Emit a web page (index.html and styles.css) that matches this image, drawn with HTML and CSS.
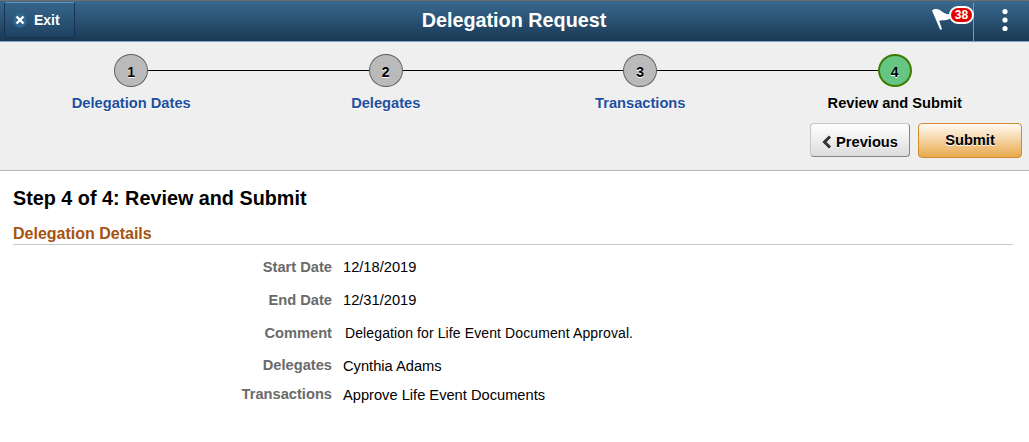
FILE: index.html
```html
<!DOCTYPE html>
<html lang="en">

<head>
  <meta charset="utf-8">
  <title>Delegation Request</title>
  <link rel="stylesheet" href="styles.css">
</head>

<body>
  <header class="banner">
    <button class="exit">
      <svg class="exit-icon" width="14" height="16" viewBox="0 0 14 16">
        <ellipse cx="7" cy="8" rx="7" ry="7.5" fill="#2f6790"/>
        <path d="M3.5 4.5L10.5 11.5M10.5 4.5L3.5 11.5" stroke="#fff" stroke-width="2.4"/>
      </svg>
      Exit
    </button>
    <h1>Delegation Request</h1>
    <div class="actions">
      <button class="flag">
        <svg width="22" height="24" viewBox="0 0 22 24">
          <path d="M0 2.4C3 .3 6 1 8.500 2.500C11 4.500 14 6.600 18 6.200L18 10.500C14.500 13.200 11 11.500 7.200 12.800L10 21.200L8.200 21.800Z" fill="#fff"/>
        </svg>
        <span class="badge">38</span>
      </button>
      <button class="menu">
        <svg width="6" height="24" viewBox="0 0 6 24">
          <circle cx="3" cy="3.500" r="2.600" fill="#fff"/>
          <circle cx="3" cy="12" r="2.600" fill="#fff"/>
          <circle cx="3" cy="20.500" r="2.600" fill="#fff"/>
        </svg>
      </button>
    </div>
  </header>

  <nav class="train">
    <ol class="steps">
      <li><span class="stop">1</span><a>Delegation Dates</a></li>
      <li><span class="stop">2</span><a>Delegates</a></li>
      <li><span class="stop">3</span><a>Transactions</a></li>
      <li class="current"><span class="stop">4</span><a>Review and Submit</a></li>
    </ol>
    <div class="buttons">
      <button class="button previous">
        <svg width="10" height="14" viewBox="0 0 10 14">
          <path d="M8 1.500L2.500 7L8 12.500" fill="none" stroke="#333" stroke-width="3"/>
        </svg>
        Previous
      </button>
      <button class="button submit">Submit</button>
    </div>
  </nav>

  <main>
    <h2>Step 4 of 4: Review and Submit</h2>
    <h3>Delegation Details</h3>
    <dl class="details">
      <dt>Start Date</dt>
      <dd>12/18/2019</dd>
      <dt>End Date</dt>
      <dd>12/31/2019</dd>
      <dt>Comment</dt>
      <dd class="comment">Delegation for Life Event Document Approval.</dd>
      <dt class="raised">Delegates</dt>
      <dd>Cynthia Adams</dd>
      <dt class="raised">Transactions</dt>
      <dd>Approve Life Event Documents</dd>
    </dl>
  </main>
</body>

</html>
```
FILE: styles.css
```css
* {
  box-sizing: border-box;
}

body {
  margin: 0;
  background: #fff;
  color: #000;
  font: 11pt/18px "Liberation Sans", Arial, sans-serif;
}

button {
  margin: 0;
  padding: 0;
  border: 0;
  background: none;
  font: inherit;
  font-weight: bold;
}

/* Banner */

.banner {
  display: grid;
  grid-template-columns: 1fr auto 1fr;
  height: 42px;
  border-top: 1px solid #706c6c;
  border-bottom: 1px solid #7ea6cb;
  background: linear-gradient(#38698f, #1a3854);
  color: #fff;
}

.exit {
  display: flex;
  align-items: center;
  justify-self: start;
  gap: 7px;
  width: 71px;
  height: 36px;
  margin: 1px 0 0 4px;
  padding: 0 0 1px 8px;
  border: 1px solid #17334d;
  border-top-color: #6b91b0;
  border-radius: 3px;
  background: linear-gradient(#35658b, #1f4261);
  color: #fff;
  font-size: 14px;
}

h1 {
  margin: 0;
  padding-right: 1px;
  font-size: 19.8px;
  line-height: 38px;
}

.actions {
  display: flex;
  justify-self: end;
}

.flag {
  position: relative;
  width: 42px;
  margin-top: 2px;
  border-right: 1px solid #8197aa;
}

.flag svg {
  position: absolute;
  left: 0;
  top: 5px;
}

.badge {
  position: absolute;
  left: 17px;
  top: 3px;
  width: 25px;
  height: 18px;
  border: 2px solid #fff;
  border-radius: 9px;
  background: #e00000;
  color: #fff;
  font-size: 12px;
  line-height: 14px;
}

.menu {
  width: 55px;
  padding: 0 0 2px 6px;
}

.menu svg {
  display: block;
  margin: 0 auto;
}

/* Train */

.train {
  height: 129px;
  padding: 12px 7px 0 4px;
  border-bottom: 1px solid #b9b9b9;
  background: #efefef;
}

.steps {
  display: grid;
  grid-template-columns: repeat(4, 1fr);
  margin: 0;
  padding: 0;
  list-style: none;
  font-weight: bold;
  text-align: center;
}

.steps li {
  display: grid;
  grid-template-columns: 1fr 34px 1fr;
  row-gap: 7px;
  align-items: center;
}

.steps li::before,
.steps li::after {
  height: 1px;
  background: #000;
  content: "";
}

.steps li:first-child::before,
.steps li:last-child::after {
  background: none;
}

.steps li::after {
  grid-area: 1 / 3;
}

.stop {
  height: 33px;
  border: 1px solid #5e5e5e;
  border-radius: 50%;
  background: #bababa;
  font-size: 14px;
  line-height: 34px;
  text-shadow: 0 1px 0 #fff;
}

.steps a {
  grid-area: 2 / 1 / 3 / 4;
  color: #1e4fa0;
  text-shadow: 0 1px 0 #fff;
}

.current .stop {
  border: 2px solid #3c7a00;
  background: #65c683;
  line-height: 32px;
}

.steps .current a {
  color: #000;
}

.buttons {
  display: flex;
  justify-content: flex-end;
  gap: 8px;
  margin-top: 11px;
}

.button {
  display: flex;
  align-items: center;
  justify-content: center;
  height: 34px;
  border: 1px solid #999;
  border-radius: 4px;
  color: #000;
  text-shadow: 0 1px 0 #fff;
}

.previous {
  gap: 4px;
  width: 100px;
  padding-top: 3px;
  border-color: #c6c6c6 #858585 #858585 #c6c6c6;
  background: linear-gradient(#fff, #dcdcdc);
}

.submit {
  width: 104px;
  height: 35px;
  padding-bottom: 1px;
  border-color: #d18a2c;
  background: linear-gradient(#fffaf3, #e8a94b);
}

/* Page */

main {
  padding: 15px 16px 0 13px;
}

h2 {
  margin: 0;
  font-size: 19.8px;
  line-height: 24px;
}

h3 {
  margin: 14px 0 0;
  border-bottom: 1px solid #c9c9c9;
  color: #a5530f;
  font-size: 16px;
  line-height: 20px;
}

.details {
  display: grid;
  grid-template-columns: 319px 1fr;
  grid-template-rows: 33px 33px 33px 29px 29px;
  column-gap: 11px;
  margin: 13px 0 0;
}

.details dt {
  color: #6a6a6a;
  font-weight: bold;
  text-align: right;
}

.details dd {
  margin: 0;
}

.details .raised {
  margin-top: -1px;
}

.details .comment {
  padding-left: 2px;
  font-size: 14px;
  letter-spacing: 0.11px;
}
```
